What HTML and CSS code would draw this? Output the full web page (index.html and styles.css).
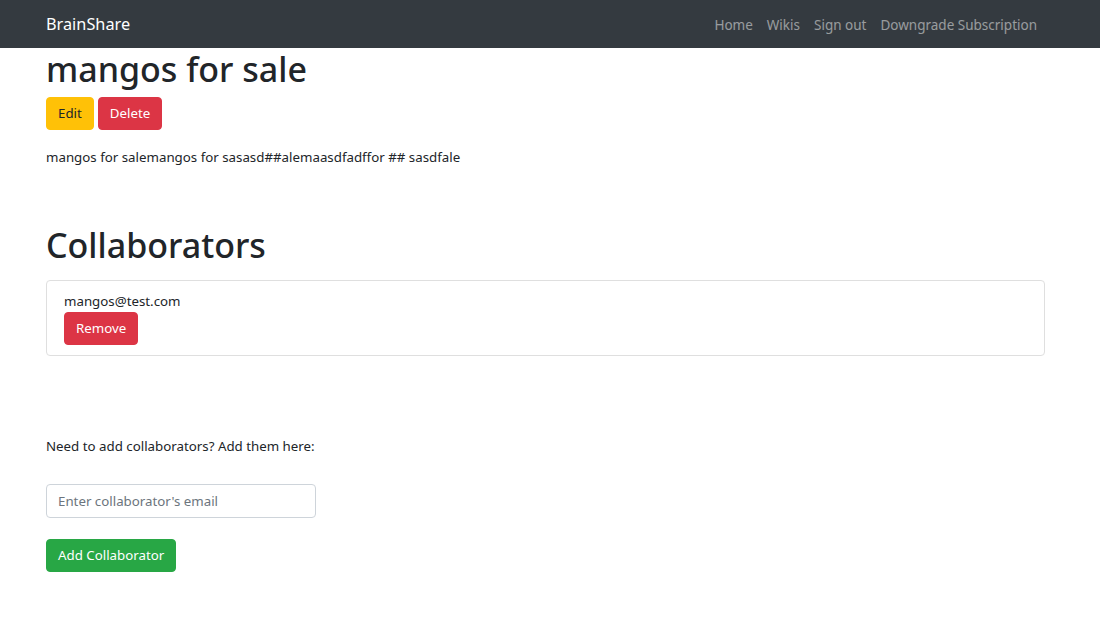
FILE: index.html
```html
<!DOCTYPE html>
<html lang="en">
<head>
<meta charset="utf-8">
<title>BrainShare</title>
<link rel="stylesheet" href="styles.css">
</head>
<body>
<nav class="navbar">
  <a class="brand" href="#">BrainShare</a>
  <ul class="nav-links">
    <li><a href="#">Home</a></li>
    <li><a href="#">Wikis</a></li>
    <li><a href="#">Sign out</a></li>
    <li><a href="#">Downgrade Subscription</a></li>
  </ul>
</nav>
<main class="container">
  <h1 class="title">mangos for sale</h1>
  <div class="actions">
    <button class="btn btn-warning">Edit</button>
    <button class="btn btn-danger">Delete</button>
  </div>
  <p class="body-text">mangos for salemangos for sasasd##alemaasdfadffor ## sasdfale</p>

  <h1 class="section-title">Collaborators</h1>
  <div class="card">
    <div class="card-text">mangos@test.com</div>
    <button class="btn btn-danger">Remove</button>
  </div>

  <p class="hint">Need to add collaborators? Add them here:</p>
  <form class="add-form">
    <input class="form-control" type="email" placeholder="Enter collaborator's email">
    <button class="btn btn-success" type="button">Add Collaborator</button>
  </form>
</main>
</body>
</html>
```

FILE: styles.css
```css
* { box-sizing: border-box; }

body {
  margin: 0;
  font-family: "Noto Sans", "Open Sans", sans-serif;
  font-size: 13.3px;
  line-height: 21.6px;
  color: #212529;
  background: #fff;
}

.navbar {
  height: 48px;
  background: #343a40;
  display: flex;
  align-items: center;
  justify-content: space-between;
  padding: 2px 56px 0 46px;
}

.brand {
  color: #fff;
  font-size: 16.3px;
  text-decoration: none;
}

.nav-links {
  list-style: none;
  display: flex;
  margin: 0;
  padding: 0;
}

.nav-links a {
  display: block;
  padding: 1px 7px 0;
  color: rgba(255, 255, 255, 0.5);
  text-decoration: none;
  font-size: 13.5px;
}

.container {
  padding: 0 55px 0 46px;
}

.title,
.section-title {
  margin: 0;
  font-size: 34px;
  font-weight: 500;
  line-height: 43px;
}

.title { margin-bottom: 6px; }

.actions {
  display: flex;
  gap: 4px;
}

.btn {
  font-family: inherit;
  font-size: 13.3px;
  line-height: 21px;
  padding: 5px 11px;
  border: 1px solid transparent;
  border-radius: 4px;
  cursor: pointer;
  height: 33px;
}

.btn-warning { background: #ffc107; border-color: #ffc107; color: #212529; }
.btn-danger { background: #dc3545; border-color: #dc3545; color: #fff; }
.btn-success { background: #28a745; border-color: #28a745; color: #fff; }

.body-text {
  margin: 17px 0 55px;
}

.section-title { margin-bottom: 13px; }

.card {
  border: 1px solid #dfdfdf;
  border-radius: 4px;
  padding: 10px 17px 10px;
  display: flex;
  flex-direction: column;
  align-items: flex-start;
}

.hint {
  margin: 80px 0 26px;
}

.add-form {
  display: flex;
  flex-direction: column;
  align-items: flex-start;
  gap: 21px;
}

.form-control {
  width: 270px;
  height: 34px;
  padding: 5px 11px;
  font-family: inherit;
  font-size: 13.3px;
  color: #495057;
  border: 1px solid #ced4da;
  border-radius: 4px;
}

.form-control::placeholder { color: #6c757d; }
```
